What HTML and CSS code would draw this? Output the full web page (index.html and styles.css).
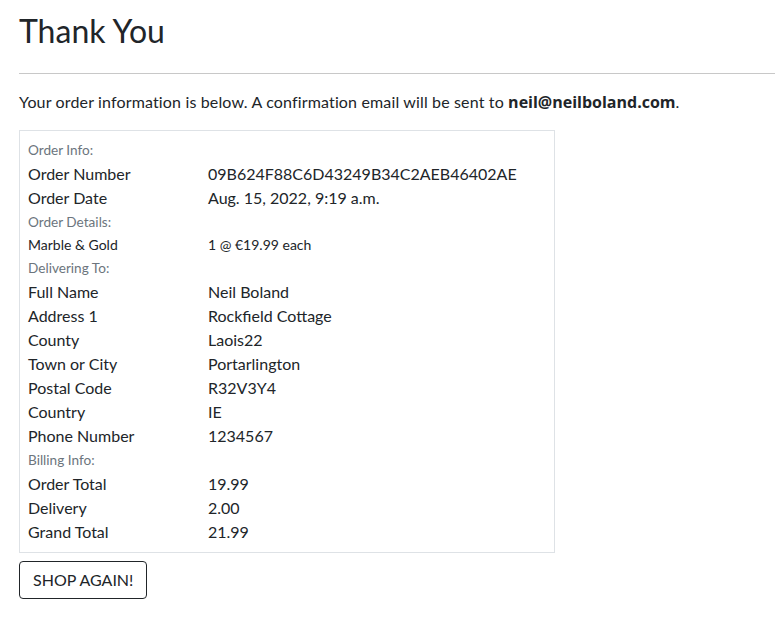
FILE: index.html
```html
<!DOCTYPE html>
<html>
<head>
<meta charset="utf-8">
<link rel="stylesheet" href="styles.css">
</head>
<body>
<main class="page">
  <h1 class="title">Thank You</h1>
  <hr class="rule">
  <p class="lead">Your order information is below. A confirmation email will be sent to <strong>neil@neilboland.com</strong>.</p>
  <section class="summary">
    <div class="section-label">Order Info:</div>
    <div class="row"><span class="key">Order Number</span><span class="val">09B624F88C6D43249B34C2AEB46402AE</span></div>
    <div class="row"><span class="key">Order Date</span><span class="val">Aug. 15, 2022, 9:19 a.m.</span></div>
    <div class="section-label">Order Details:</div>
    <div class="row small"><span class="key">Marble &amp; Gold</span><span class="val">1 @ €19.99 each</span></div>
    <div class="section-label">Delivering To:</div>
    <div class="row"><span class="key">Full Name</span><span class="val">Neil Boland</span></div>
    <div class="row"><span class="key">Address 1</span><span class="val">Rockfield Cottage</span></div>
    <div class="row"><span class="key">County</span><span class="val">Laois22</span></div>
    <div class="row"><span class="key">Town or City</span><span class="val">Portarlington</span></div>
    <div class="row"><span class="key">Postal Code</span><span class="val">R32V3Y4</span></div>
    <div class="row"><span class="key">Country</span><span class="val">IE</span></div>
    <div class="row"><span class="key">Phone Number</span><span class="val">1234567</span></div>
    <div class="section-label">Billing Info:</div>
    <div class="row"><span class="key">Order Total</span><span class="val">19.99</span></div>
    <div class="row"><span class="key">Delivery</span><span class="val">2.00</span></div>
    <div class="row"><span class="key">Grand Total</span><span class="val">21.99</span></div>
  </section>
  <a class="btn" href="#">SHOP AGAIN!</a>
</main>
</body>
</html>
```
FILE: styles.css
```css
* { box-sizing: border-box; }
body {
  margin: 0;
  font-family: "Lato", "Open Sans", sans-serif;
  color: #212529;
  font-size: 16px;
  line-height: 1.5;
  background: #fff;
}
.page {
  padding: 0 0 20px 19px;
}
.title {
  margin: 0;
  padding-top: 12px;
  font-size: 32px;
  font-weight: 400;
  line-height: 1.2;
}
.rule {
  margin: 23px 0 16px;
  border: 0;
  border-top: 1px solid #c8c8c8;
}
.lead {
  margin: 0 0 16px;
  letter-spacing: 0.15px;
}
.lead strong {
  font-family: "Open Sans", "Lato", sans-serif;
  font-weight: 700;
  font-size: 16px;
  letter-spacing: 0;
}
.summary {
  width: 536px;
  border: 1px solid #dee2e6;
  padding: 7px 8px 8px;
  margin-bottom: 8px;
}
.section-label {
  font-size: 13.6px;
  color: #6c757d;
  line-height: 24px;
}
.row {
  display: flex;
  line-height: 24px;
}
.key {
  flex: 0 0 180px;
}
.val {
  flex: 1 1 auto;
}
.row.small {
  font-size: 14px;
  line-height: 22px;
}
.btn {
  display: inline-block;
  color: #212529;
  text-decoration: none;
  border: 1px solid #212529;
  border-radius: 4px;
  padding: 6px 13px;
  font-size: 16px;
  line-height: 24px;
}
```
